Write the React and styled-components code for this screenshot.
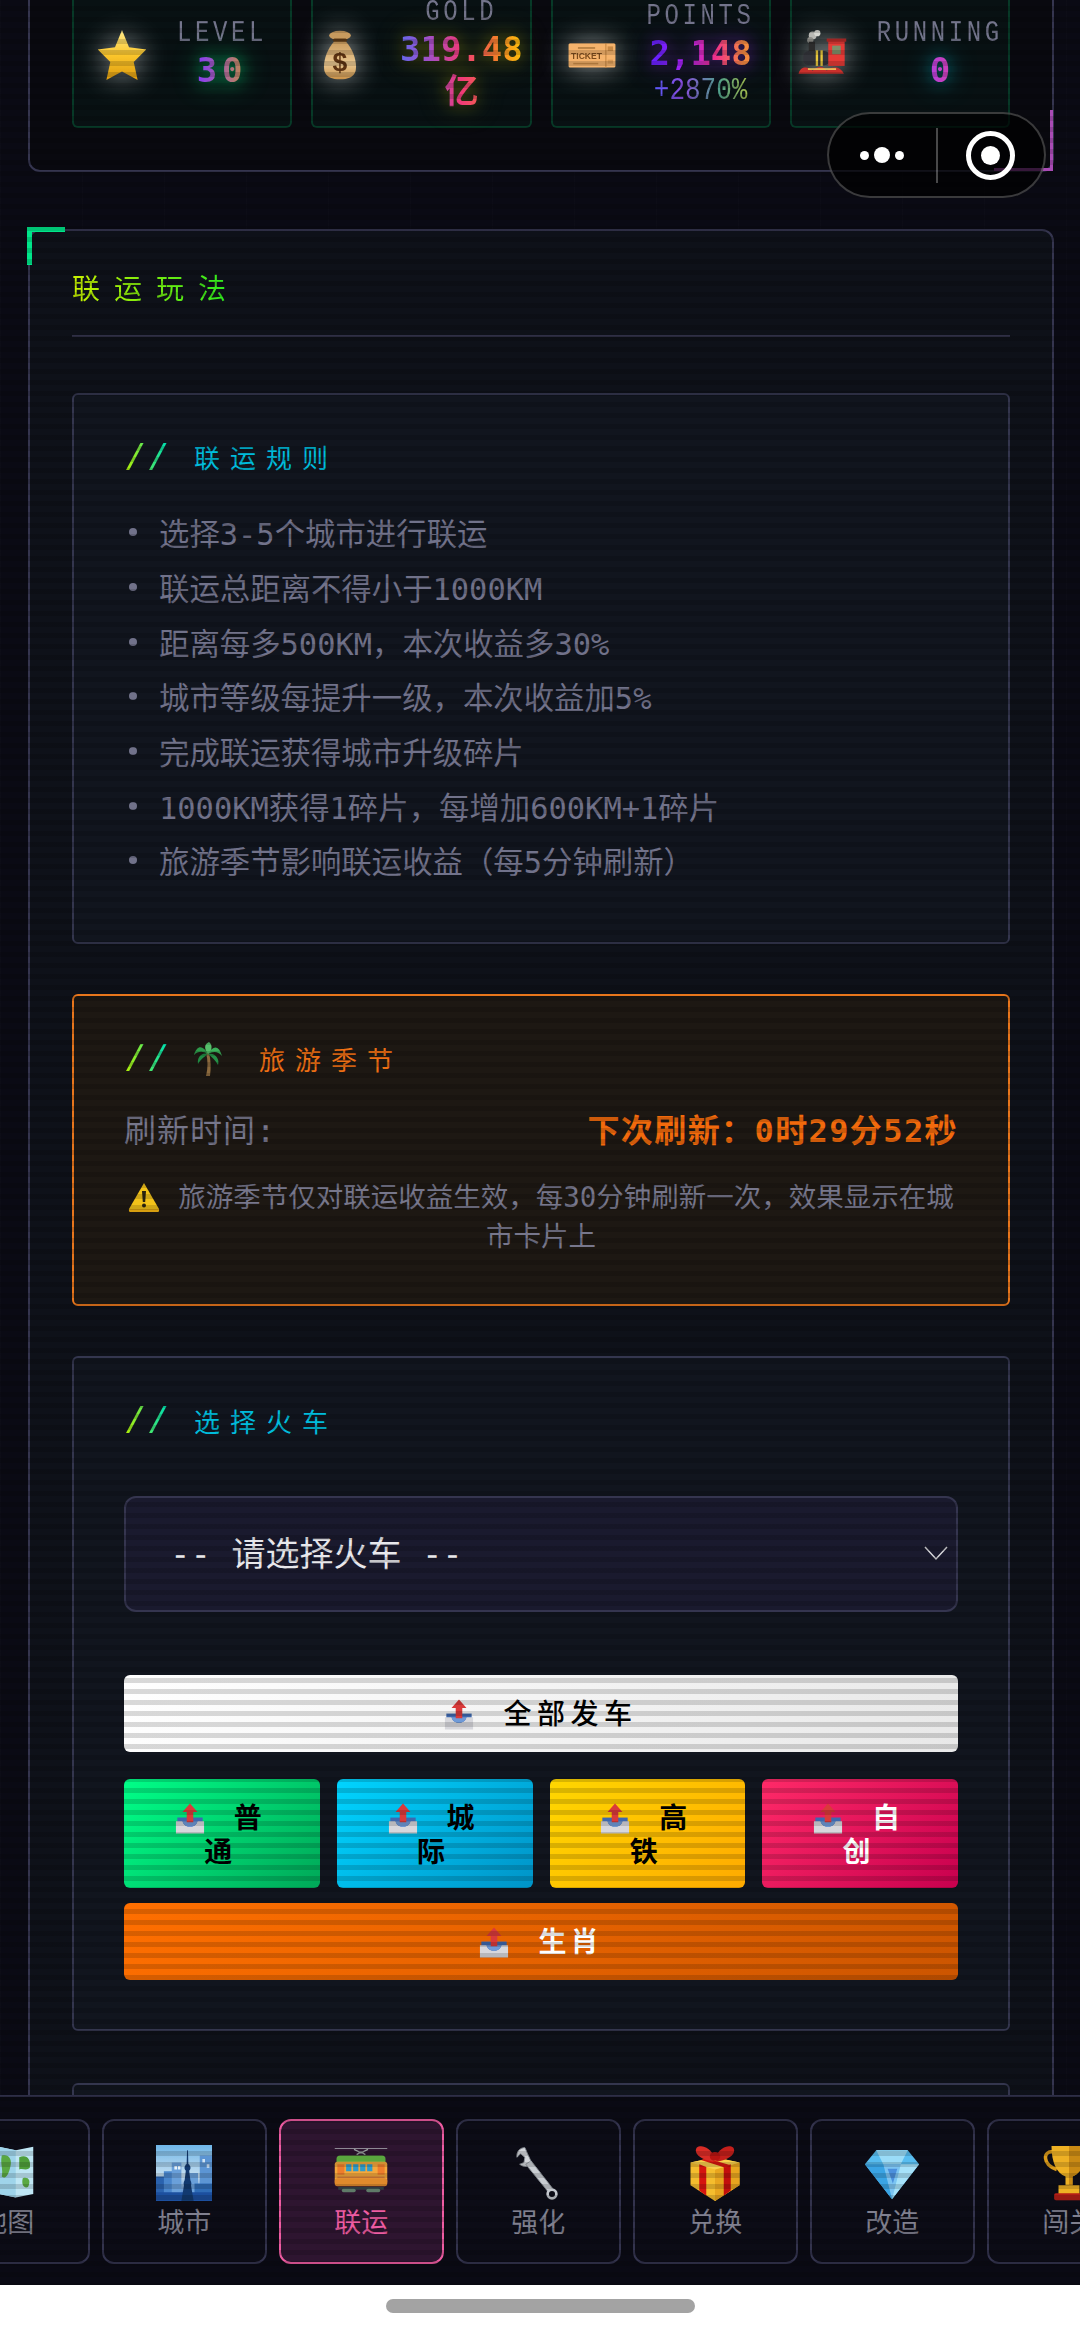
import React from "react";
import styled, { createGlobalStyle } from "styled-components";

const GlobalStyle = createGlobalStyle`
  html, body {
    margin: 0;
    padding: 0;
    background: #fff;
  }
  * {
    box-sizing: border-box;
  }
`;

const MONO = `"DejaVu Sans Mono", "Noto Sans CJK SC", monospace`;
const THIN = `"Liberation Mono", "Noto Sans CJK SC", monospace`;
const SANS = `"Noto Sans CJK SC", "Noto Sans", sans-serif`;

const App_ = styled.div`
  width: 1080px;
  height: 2330px;
  display: flex;
  flex-direction: column;
  overflow: hidden;
  position: relative;
  font-family: ${MONO};
`;

const Screen = styled.div`
  flex: 1;
  min-height: 0;
  display: flex;
  flex-direction: column;
  position: relative;
  background-color: #0a0a14;
  background-image: repeating-linear-gradient(90deg, rgba(255, 255, 255, 0.012) 0 1px, transparent 1px 82px);
`;

const Scanlines = styled.div`
  position: absolute;
  inset: 0;
  z-index: 5;
  pointer-events: none;
  background: repeating-linear-gradient(180deg, transparent 0 6px, rgba(0, 0, 0, 0.15) 6px 11px);
`;

const Content = styled.main`
  flex: 1;
  min-height: 0;
  overflow: hidden;
  padding: 0 26px 0 28px;
`;

const TopPanel = styled.section`
  position: relative;
  margin-top: -60px;
  margin-bottom: 57px;
  padding: 40px 42px 42px;
  border: 2px solid #35354f;
  border-radius: 12px;
  background: #09090f;

  &::after {
    content: "";
    position: absolute;
    right: -1px;
    bottom: -1px;
    width: 56px;
    height: 58px;
    border-right: 3px solid #a94bb5;
    border-bottom: 3px solid #a94bb5;
  }
`;

const StatGrid = styled.div`
  display: grid;
  grid-template-columns: repeat(4, 1fr);
  gap: 19px;
`;

const StatCard = styled.div`
  height: 146px;
  display: flex;
  align-items: center;
  justify-content: center;
  gap: 30px;
  padding: 0 2px;
  border: 2px solid rgba(0, 255, 136, 0.17);
  border-radius: 6px;
  background: rgba(0, 255, 136, 0.035);
`;

const StatIcon = styled.span`
  flex: none;
  display: block;
  width: 50px;
  height: 50px;
  filter: drop-shadow(0 0 14px rgba(255, 255, 255, 0.6));

  svg {
    display: block;
    width: 100%;
    height: 100%;
  }
`;

const StatText = styled.div`
  text-align: center;
  min-width: 0;
`;

const StatLabel = styled.div`
  font-family: ${THIN};
  font-size: 24px;
  line-height: 30px;
  letter-spacing: 3.6px;
  color: #74758c;
  transform: scaleY(1.2);
`;

const StatValue = styled.div`
  font-family: ${MONO};
  font-weight: 700;
  font-size: 34px;
  line-height: 42px;
  letter-spacing: ${(p) => p.$spacing || "0"};
  background: ${(p) => p.$gradient};
  -webkit-background-clip: text;
  background-clip: text;
  color: transparent;
  filter: drop-shadow(0 0 8px ${(p) => p.$glow}) drop-shadow(0 0 14px ${(p) => p.$glow});
`;

const StatSub = styled.div`
  font-family: ${THIN};
  font-size: 26px;
  line-height: 34px;
  background: linear-gradient(90deg, #4d5cff, #8a4de0, #4fa08a, #b8c23c);
  -webkit-background-clip: text;
  background-clip: text;
  color: transparent;
  transform: scaleY(1.2);
`;

const Capsule = styled.div`
  position: absolute;
  z-index: 10;
  top: 112px;
  left: 827px;
  width: 219px;
  height: 86px;
  display: flex;
  align-items: center;
  border: 2px solid rgba(255, 255, 255, 0.22);
  border-radius: 43px;
  background: rgba(0, 0, 0, 0.68);
`;

const CapsuleSide = styled.div`
  flex: 1;
  height: 55px;
  display: flex;
  align-items: center;
  justify-content: center;
  gap: 5px;
  & + & {
    border-left: 2px solid rgba(255, 255, 255, 0.28);
  }
`;

const Dot = styled.span`
  width: ${(p) => p.$size}px;
  height: ${(p) => p.$size}px;
  border-radius: 50%;
  background: #fff;
`;

const Target = styled.span`
  width: 49px;
  height: 49px;
  display: flex;
  align-items: center;
  justify-content: center;
  border: 5px solid #fff;
  border-radius: 50%;

  &::after {
    content: "";
    width: 19px;
    height: 19px;
    border-radius: 50%;
    background: #fff;
  }
`;

const Panel = styled.section`
  position: relative;
  padding: 36px 42px 0;
  border: 2px solid #35354f;
  border-radius: 12px;
  background: #0e1119;

  &::before {
    content: "";
    position: absolute;
    top: -4px;
    left: -3px;
    width: 33px;
    height: 33px;
    border-top: 5px solid #00e68a;
    border-left: 5px solid #00e68a;
  }
`;

const PanelTitle = styled.h2`
  margin: 0 0 56px;
  padding-bottom: 28px;
  border-bottom: 2px solid #2f2f45;
  font-family: ${SANS};
  font-weight: 400;
  font-size: 28px;
  line-height: 40px;
  letter-spacing: 14px;

  span {
    background: linear-gradient(90deg, #c8f000, #20e820);
    -webkit-background-clip: text;
    background-clip: text;
    color: transparent;
  }
`;

const Card = styled.div`
  margin-bottom: ${(p) => p.$gap || "52px"};
  padding: ${(p) => p.$padding};
  border: 2px solid ${(p) => (p.$warm ? "#e8761c" : "#34364e")};
  border-radius: 6px;
  background: ${(p) => (p.$warm ? "#1d1813" : "#11151e")};
  overflow: hidden;
`;

const CardTitle = styled.h3`
  margin: 0;
  display: flex;
  align-items: center;
  height: 36px;
  font-family: ${SANS};
  font-weight: 400;
  font-size: 26px;
  line-height: 36px;
  letter-spacing: 10px;
  color: ${(p) => p.$color};
`;

const Slashes = styled.span`
  flex: none;
  width: 70px;
  padding-top: 3.5px;
  margin-bottom: -3.5px;
  font-family: ${THIN};
  font-size: 36px;
  line-height: 36px;
  letter-spacing: 1.4px;
  background: linear-gradient(90deg, #b8f000, #00e0b0 60%);
  -webkit-background-clip: text;
  background-clip: text;
  color: transparent;
`;

const TitleIcon = styled.span`
  flex: none;
  display: block;
  width: 30px;
  height: 34px;
  margin-right: 36px;
  margin-left: -1px;

  svg {
    display: block;
    width: 100%;
    height: 100%;
  }
`;

const RuleList = styled.ul`
  list-style: none;
  margin: 30px 0 0;
  padding: 0;
`;

const RuleItem = styled.li`
  display: flex;
  align-items: center;
  height: 54.7px;
  font-size: 30.4px;
  white-space: nowrap;
  color: #71728a;

  &::before {
    content: "";
    flex: none;
    width: 8px;
    height: 8px;
    margin: 0 22px 0 5px;
    border-radius: 50%;
    background: #71728a;
  }
`;

const RefreshRow = styled.div`
  display: flex;
  align-items: center;
  justify-content: space-between;
  margin-top: 32px;
  font-size: 32px;
  line-height: 44px;
`;

const RefreshLabel = styled.span`
  letter-spacing: 1px;
  color: #77778c;
`;

const RefreshTime = styled.span`
  font-weight: 700;
  letter-spacing: 1.4px;
  color: #f26a0c;
`;

const Note = styled.p`
  margin: 25px 0 0;
  text-align: center;
  font-size: 27.5px;
  line-height: 39px;
  color: #77778c;
`;

const NoteIcon = styled.span`
  display: inline-block;
  vertical-align: -5px;
  width: 32px;
  height: 30px;
  margin-right: 18px;

  svg {
    display: block;
    width: 100%;
    height: 100%;
  }
`;

const SelectWrap = styled.div`
  position: relative;
  margin-top: 57px;
`;

const TrainSelect = styled.select`
  display: block;
  width: 100%;
  height: 116px;
  padding: 0 80px 0 44px;
  appearance: none;
  border: 2px solid #35354f;
  border-radius: 12px;
  background: #1a1a2e;
  font-family: ${MONO};
  font-size: 34px;
  color: #e8e8ec;
  outline: none;
`;

const Chevron = styled.svg`
  position: absolute;
  top: 49px;
  right: 10px;
  width: 24px;
  height: 16px;
  pointer-events: none;
`;

const DispatchGroup = styled.div`
  margin-top: 63px;
  display: grid;
  grid-template-columns: repeat(4, 1fr);
  gap: 15px 17px;
`;

const DispatchButton = styled.button`
  grid-column: ${(p) => (p.$wide ? "1 / -1" : "auto")};
  margin-bottom: ${(p) => (p.$lead ? "12px" : "0")};
  height: ${(p) => (p.$wide ? "77px" : "109px")};
  padding: 0 40px;
  border: none;
  border-radius: 6px;
  background: ${(p) => p.$bg};
  font-family: ${SANS};
  font-size: 28px;
  font-weight: ${(p) => p.$weight || 700};
  line-height: 33px;
  letter-spacing: ${(p) => p.$spacing || "7px"};
  color: ${(p) => p.$color};
`;

const TrayIcon = styled.span`
  display: inline-block;
  vertical-align: -6px;
  width: 30px;
  height: 31px;
  margin-right: 29px;

  svg {
    display: block;
    width: 100%;
    height: 100%;
  }
`;

const NextPanel = styled.div`
  height: 60px;
  border: 2px solid #34364e;
  border-radius: 6px;
  background: #11151e;
`;

const TabBar = styled.nav`
  flex: none;
  position: relative;
  height: 190px;
  padding-top: 22px;
  display: flex;
  overflow: hidden;
  border-top: 2px solid #2e2e47;
  background: #0a0a14;
`;

const TabTrack = styled.div`
  display: flex;
  gap: 12.5px;
  margin-left: -75px;
`;

const Tab = styled.div`
  flex: none;
  width: 164.5px;
  height: 145px;
  display: flex;
  flex-direction: column;
  align-items: center;
  padding-top: 24px;
  border: 2px solid ${(p) => (p.$active ? "#ee5ca2" : "#33334d")};
  border-radius: 12px;
  background: ${(p) => (p.$active ? "#2e1530" : "#0c0c16")};
  font-family: ${SANS};
  font-size: 27px;
  line-height: 36px;
  color: ${(p) => (p.$active ? "#ee5ca2" : "#80808f")};
`;

const TabIcon = styled.span`
  display: block;
  width: 56px;
  height: 56px;
  margin-bottom: 2px;

  svg {
    display: block;
    width: 100%;
    height: 100%;
  }
`;

const HomeArea = styled.div`
  flex: none;
  height: 45px;
  padding-top: 14px;
  display: flex;
  justify-content: center;
  background: #fff;
`;

const HomePill = styled.div`
  width: 309px;
  height: 14px;
  border-radius: 7px;
  background: #a3a3a3;
`;

/* icons: hand drawn stand-ins for the colour emoji of the page */

const Star = () => (
  <svg viewBox="0 0 64 64">
    <defs>
      <linearGradient id="starFill" x1="0" y1="0" x2="0" y2="1">
        <stop offset="0" stopColor="#ffe98a" />
        <stop offset="0.5" stopColor="#fcc72c" />
        <stop offset="1" stopColor="#dc9a0e" />
      </linearGradient>
    </defs>
    <path d="M32 0 L41 22 L63 25 L47 41 L52 64 L32 53 L12 64 L17 41 L1 25 L23 22 Z" fill="url(#starFill)" />
  </svg>
);

const MoneyBag = () => (
  <svg viewBox="0 0 64 64">
    <defs>
      <linearGradient id="bagFill" x1="0" y1="0" x2="0" y2="1">
        <stop offset="0" stopColor="#c99a5c" />
        <stop offset="0.6" stopColor="#e8c690" />
        <stop offset="1" stopColor="#c9924a" />
      </linearGradient>
    </defs>
    <path d="M25 14 C14 26 10 42 12 52 C14 60 22 63 32 63 C42 63 50 60 52 52 C54 42 50 26 39 14 Z" fill="url(#bagFill)" />
    <ellipse cx="32" cy="7" rx="14" ry="6" fill="#c79a5e" />
    <rect x="23" y="11" width="18" height="4" rx="2" fill="#5d3a16" />
    <text x="32" y="53" textAnchor="middle" fontFamily="Liberation Sans, sans-serif" fontWeight="700" fontSize="34" fill="#5c3212">$</text>
  </svg>
);

const Ticket = () => (
  <svg viewBox="0 0 64 64">
    <rect x="2" y="17" width="60" height="31" rx="2" fill="#f5b36c" />
    <rect x="49" y="17" width="1.5" height="31" fill="#c98a45" />
    <rect x="52" y="21" width="7" height="6" fill="#c98a45" />
    <rect x="52" y="38" width="7" height="5" fill="#d99a55" />
    <text x="25" y="37" textAnchor="middle" fontFamily="Liberation Sans, sans-serif" fontWeight="700" fontSize="11" fill="#7a4a1c">TICKET</text>
    <rect x="14" y="22" width="22" height="2" fill="#b07a3c" />
    <rect x="8" y="42" width="32" height="2" fill="#c98a45" />
  </svg>
);

const Locomotive = () => (
  <svg viewBox="0 0 64 64">
    <circle cx="20" cy="7" r="5" fill="#b9b9b4" />
    <circle cx="26" cy="4" r="4" fill="#d8d8d2" />
    <circle cx="17" cy="13" r="4" fill="#8f8f8a" />
    <rect x="15" y="15" width="8" height="13" fill="#2c2c2c" />
    <rect x="8" y="27" width="34" height="18" rx="7" fill="#33343a" />
    <rect x="24" y="26" width="3" height="20" fill="#e8c83c" />
    <rect x="30" y="26" width="3" height="20" fill="#e8c83c" />
    <rect x="40" y="13" width="21" height="33" fill="#e53a36" />
    <rect x="38" y="11" width="25" height="4" fill="#b82a28" />
    <rect x="45" y="20" width="11" height="11" fill="#7f8f6a" />
    <path d="M2 56 C4 46 14 46 20 52 C26 46 34 46 38 52 C44 46 56 46 60 56 Z" fill="#c9302c" />
    <path d="M14 50 H50" stroke="#f2d060" strokeWidth="2" />
  </svg>
);

const Palm = () => (
  <svg viewBox="0 0 30 34">
    <path d="M13 11 C15 18 15 26 13 34 H17 C18 26 18 18 16 11 Z" fill="#8c6a3e" />
    <path d="M15 12 C10 3 4 3 1 13 C5 9 10 9 15 12 Z" fill="#2d9a4a" />
    <path d="M15 12 C20 3 26 3 29 14 C25 9 20 9 15 12 Z" fill="#3bb05a" />
    <path d="M15 12 C11 7 11 2 16 0 C20 3 19 9 15 12 Z" fill="#55bf6a" />
    <path d="M15 12 C8 10 4 16 5 22 C8 17 11 15 15 12 Z" fill="#1f8a42" />
    <path d="M15 12 C22 10 27 17 25 23 C22 18 19 15 15 12 Z" fill="#258f47" />
  </svg>
);

const Warning = () => (
  <svg viewBox="0 0 32 30">
    <path d="M16 1 L31 27 Q31.5 30 29 30 H3 Q0.5 30 1 27 Z" fill="#f2c21a" />
    <path d="M1 27 H31 Q31.5 30 29 30 H3 Q0.5 30 1 27 Z" fill="#d69e10" />
    <path d="M14 9 H18 L17.2 20 H14.8 Z" fill="#2b2410" />
    <circle cx="16" cy="23.5" r="2" fill="#2b2410" />
  </svg>
);

const Outbox = () => (
  <svg viewBox="0 0 64 64">
    <path d="M5 30 H59 V50 H5 Z" fill="#3e68ae" />
    <path d="M2 38 H16 C20 54 44 54 48 38 H62 V64 H2 Z" fill="#d7d7dc" />
    <path d="M16 38 C20 54 44 54 48 38 Z" fill="#6f9ad8" />
    <path d="M32 0 L48 18 H39 V40 H25 V18 H16 Z" fill="#d93a3a" />
  </svg>
);

const WorldMap = () => (
  <svg viewBox="0 0 64 64">
    <path d="M2 6 L22 2 L42 6 L62 2 V56 L42 60 L22 56 L2 60 Z" fill="#bfe6f4" />
    <path d="M22 2 L42 6 V60 L22 56 Z" fill="#9fd4ea" />
    <path d="M4 14 C12 8 20 12 18 22 C16 32 10 28 8 36 C4 30 2 22 4 14 Z" fill="#4f9e3a" />
    <path d="M12 18 C16 16 18 20 14 24 Z" fill="#d8a63c" />
    <path d="M26 12 C34 10 38 16 36 24 C34 34 30 40 26 36 C28 28 24 22 26 12 Z" fill="#5aa842" />
    <path d="M46 14 C54 10 60 16 58 26 C54 30 50 26 46 28 Z" fill="#4f9e3a" />
    <path d="M50 38 C56 36 60 40 56 48 C52 50 48 46 50 38 Z" fill="#5aa842" />
  </svg>
);

const City = () => (
  <svg viewBox="0 0 64 64">
    <defs>
      <linearGradient id="citySky" x1="0" y1="0" x2="0" y2="1">
        <stop offset="0" stopColor="#6fb6e8" />
        <stop offset="0.55" stopColor="#c4def0" />
        <stop offset="1" stopColor="#2a66b8" />
      </linearGradient>
    </defs>
    <rect width="64" height="64" fill="url(#citySky)" />
    <rect x="0" y="36" width="10" height="28" fill="#2a62ae" />
    <rect x="9" y="30" width="13" height="34" fill="#4a86cc" />
    <rect x="18" y="20" width="11" height="44" fill="#6aa0da" />
    <rect x="38" y="32" width="10" height="32" fill="#6aa0da" />
    <rect x="50" y="12" width="14" height="52" fill="#5c95d4" />
    <rect x="44" y="44" width="20" height="20" fill="#2f6cb6" />
    <rect x="0" y="54" width="64" height="10" fill="#1c4f9e" />
    <rect x="21" y="24" width="3" height="4" fill="#e6f2fb" />
    <rect x="25" y="24" width="3" height="4" fill="#e6f2fb" />
    <rect x="53" y="16" width="3" height="4" fill="#cfe4f6" />
    <rect x="58" y="22" width="3" height="4" fill="#cfe4f6" />
    <path d="M35.5 6 H36.5 L37 22 H38 V30 L40 46 L43 64 H29 L32 46 L34 30 V22 H35 Z" fill="#12396f" />
    <circle cx="36" cy="26" r="3.4" fill="#12396f" />
    <circle cx="36" cy="44" r="4.4" fill="#12396f" />
  </svg>
);

const Tram = () => (
  <svg viewBox="0 0 64 64">
    <path d="M2 4 H62" stroke="#9a9aa0" strokeWidth="1" />
    <path d="M24 5 L32 9 L40 5 M27 11 L32 8 L37 11" stroke="#9aa0a0" strokeWidth="1.5" fill="none" />
    <path d="M4 16 Q4 12 8 12 H56 Q60 12 60 16 V20 H4 Z" fill="#5aa63e" />
    <rect x="2" y="19" width="60" height="26" rx="3" fill="#f4a83c" />
    <rect x="2" y="38" width="60" height="9" rx="3" fill="#e08a2c" />
    <rect x="5" y="22" width="8" height="12" fill="#ee7d2c" />
    <rect x="51" y="22" width="8" height="12" fill="#ee7d2c" />
    <rect x="15" y="22" width="6" height="8" fill="#2f9bc9" />
    <rect x="23" y="22" width="6" height="8" fill="#2f9bc9" />
    <rect x="31" y="22" width="6" height="8" fill="#2f9bc9" />
    <rect x="39" y="22" width="6" height="8" fill="#2f9bc9" />
    <rect x="5" y="36" width="54" height="2" fill="#d9803a" />
    <rect x="6" y="48" width="52" height="3" fill="#37454a" />
    <rect x="10" y="50" width="16" height="4" rx="2" fill="#5f7a68" />
    <rect x="38" y="50" width="16" height="4" rx="2" fill="#5f7a68" />
  </svg>
);

const Wrench = () => (
  <svg viewBox="0 0 64 64">
    <path d="M17 3 C11 3 7 8 8 14 L12 10 L17 14 L16 20 L11 22 C16 26 22 25 25 21 Z" fill="#d3d6da" stroke="#8d9299" strokeWidth="1" />
    <path d="M18 22 L24 18 L49 50 L44 54 Z" fill="#c9cdd2" stroke="#8d9299" strokeWidth="1" />
    <circle cx="48" cy="56" r="5" fill="#0c0c16" stroke="#c4c8ce" strokeWidth="3" />
  </svg>
);

const Gift = () => (
  <svg viewBox="0 0 64 64">
    <path d="M32 14 L60 20 V46 L32 64 L4 46 V20 Z" fill="#f5bd2e" />
    <path d="M32 28 L60 20 V46 L32 64 Z" fill="#e8a51e" />
    <path d="M4 20 L32 28 L60 20 L32 14 Z" fill="#f9cf4c" />
    <path d="M14 22 L22 25 V58 L14 52 Z" fill="#d5150f" />
    <path d="M42 25 L50 22 V52 L42 58 Z" fill="#c20f0c" />
    <path d="M16 17 L44 26 L50 23 L22 15 Z" fill="#d5150f" />
    <path d="M32 14 C26 2 16 -1 11 3 C8 8 12 16 30 19 Z" fill="#d92c26" />
    <path d="M32 14 C38 2 48 -1 53 3 C56 8 52 16 34 19 Z" fill="#c41f1b" />
    <ellipse cx="32" cy="13" rx="6" ry="5" fill="#b81411" />
  </svg>
);

const Gem = () => (
  <svg viewBox="0 0 64 64">
    <path d="M14 6 H50 L63 22 L32 62 L1 22 Z" fill="#58bdf0" />
    <path d="M14 6 L22 22 H42 L50 6 Z" fill="#9adcf8" />
    <path d="M22 22 H42 L32 62 Z" fill="#7cc4f2" />
    <path d="M1 22 H22 L32 62 Z" fill="#3aa4e4" />
    <path d="M42 22 H63 L32 62 Z" fill="#a6e2fa" />
    <path d="M27 27 H38 L33 44 Z" fill="#4b90dd" />
  </svg>
);

const Trophy = () => (
  <svg viewBox="0 0 64 64">
    <path d="M14 8 C2 6 1 22 18 28" fill="none" stroke="#d99a1a" strokeWidth="4" />
    <path d="M50 8 C62 6 63 22 46 28" fill="none" stroke="#d99a1a" strokeWidth="4" />
    <path d="M12 1 H52 C52 20 46 32 36 36 V46 H28 V36 C18 32 12 20 12 1 Z" fill="#eeb124" />
    <path d="M32 1 H52 C52 20 46 32 36 36 V46 H32 Z" fill="#c98a14" />
    <rect x="20" y="46" width="24" height="10" fill="#eeb124" />
    <rect x="15" y="55" width="34" height="8" rx="2" fill="#b51e16" />
  </svg>
);

const rules = [
  "选择3-5个城市进行联运",
  "联运总距离不得小于1000KM",
  "距离每多500KM，本次收益多30%",
  "城市等级每提升一级，本次收益加5%",
  "完成联运获得城市升级碎片",
  "1000KM获得1碎片，每增加600KM+1碎片",
  "旅游季节影响联运收益（每5分钟刷新）",
];

const tabs = [
  { label: "地图", icon: <WorldMap /> },
  { label: "城市", icon: <City /> },
  { label: "联运", icon: <Tram />, active: true },
  { label: "强化", icon: <Wrench /> },
  { label: "兑换", icon: <Gift /> },
  { label: "改造", icon: <Gem /> },
  { label: "闯关", icon: <Trophy /> },
];

const dispatch = [
  { label: "普通", bg: "linear-gradient(135deg, #00ff88, #00a858)", color: "#000" },
  { label: "城际", bg: "linear-gradient(135deg, #00d4ff, #0094c8)", color: "#000" },
  { label: "高铁", bg: "linear-gradient(135deg, #ffd700, #ffaa00)", color: "#000" },
  { label: "自创", bg: "linear-gradient(135deg, #ff2a68, #c8004e)", color: "#fff" },
];

const App = () => (
  <App_>
    <GlobalStyle />
    <Screen>
      <Content>
        <TopPanel>
          <StatGrid>
            <StatCard>
              <StatIcon><Star /></StatIcon>
              <StatText>
                <StatLabel>LEVEL</StatLabel>
                <StatValue $spacing="5px" $gradient="linear-gradient(90deg, #8a3ff0 25%, #c08a50 75%)" $glow="rgba(0, 255, 136, 0.45)">30</StatValue>
              </StatText>
            </StatCard>
            <StatCard>
              <StatIcon><MoneyBag /></StatIcon>
              <StatText>
                <StatLabel>GOLD</StatLabel>
                <StatValue $gradient="linear-gradient(90deg, #5a6cf0, #a050c8, #f03a78, #f47a30, #ffd000)" $glow="rgba(210, 200, 0, 0.3)">319.48亿</StatValue>
              </StatText>
            </StatCard>
            <StatCard>
              <StatIcon><Ticket /></StatIcon>
              <StatText>
                <StatLabel>POINTS</StatLabel>
                <StatValue $gradient="linear-gradient(90deg, #6a20ff 10%, #b020f0, #f0308a, #f58a40 90%)" $glow="rgba(140, 40, 220, 0.4)">2,148</StatValue>
                <StatSub>+2870%</StatSub>
              </StatText>
            </StatCard>
            <StatCard>
              <StatIcon><Locomotive /></StatIcon>
              <StatText>
                <StatLabel>RUNNING</StatLabel>
                <StatValue $gradient="linear-gradient(90deg, #b040e0 40%, #d040b0 60%)" $glow="rgba(0, 200, 220, 0.4)">0</StatValue>
              </StatText>
            </StatCard>
          </StatGrid>
        </TopPanel>

        <Panel>
          <PanelTitle><span>联运玩法</span></PanelTitle>

          <Card $gap="50px" $padding="44px 50px 54px">
            <CardTitle $color="#00bcdc">
              <Slashes>//</Slashes>联运规则
            </CardTitle>
            <RuleList>
              {rules.map((rule) => (
                <RuleItem key={rule}>{rule}</RuleItem>
              ))}
            </RuleList>
          </Card>

          <Card $warm $gap="50px" $padding="45px 50px 48px">
            <CardTitle $color="#ee6f14">
              <Slashes>//</Slashes>
              <TitleIcon><Palm /></TitleIcon>
              旅游季节
            </CardTitle>
            <RefreshRow>
              <RefreshLabel>刷新时间:</RefreshLabel>
              <RefreshTime>下次刷新：0时29分52秒</RefreshTime>
            </RefreshRow>
            <Note>
              <NoteIcon><Warning /></NoteIcon>
              旅游季节仅对联运收益生效，每30分钟刷新一次，效果显示在城市卡片上
            </Note>
          </Card>

          <Card $padding="45px 50px 49px">
            <CardTitle $color="#00bcdc">
              <Slashes>//</Slashes>选择火车
            </CardTitle>
            <SelectWrap>
              <TrainSelect defaultValue="">
                <option value="">-- 请选择火车 --</option>
              </TrainSelect>
              <Chevron viewBox="0 0 24 16">
                <path d="M1 2 L12 14 L23 2" fill="none" stroke="#d8d8dc" strokeWidth="1.5" />
              </Chevron>
            </SelectWrap>
            <DispatchGroup>
              <DispatchButton $wide $lead $weight={500} $spacing="5.5px" $bg="linear-gradient(135deg, #ffffff, #e8e8e8)" $color="#000">
                <TrayIcon><Outbox /></TrayIcon>全部发车
              </DispatchButton>
              {dispatch.map((item) => (
                <DispatchButton key={item.label} $bg={item.bg} $color={item.color}>
                  <TrayIcon><Outbox /></TrayIcon>{item.label}
                </DispatchButton>
              ))}
              <DispatchButton $wide $spacing="4px" $bg="linear-gradient(135deg, #ff6f00, #cc5500)" $color="#fff">
                <TrayIcon><Outbox /></TrayIcon>生肖
              </DispatchButton>
            </DispatchGroup>
          </Card>

          <NextPanel />
        </Panel>
      </Content>

      <TabBar>
        <TabTrack>
          {tabs.map((tab) => (
            <Tab key={tab.label} $active={tab.active}>
              <TabIcon>{tab.icon}</TabIcon>
              {tab.label}
            </Tab>
          ))}
        </TabTrack>
      </TabBar>

      <Scanlines />
      <Capsule>
        <CapsuleSide>
          <Dot $size={9} />
          <Dot $size={16} />
          <Dot $size={9} />
        </CapsuleSide>
        <CapsuleSide>
          <Target />
        </CapsuleSide>
      </Capsule>
    </Screen>
    <HomeArea>
      <HomePill />
    </HomeArea>
  </App_>
);

export default App;
